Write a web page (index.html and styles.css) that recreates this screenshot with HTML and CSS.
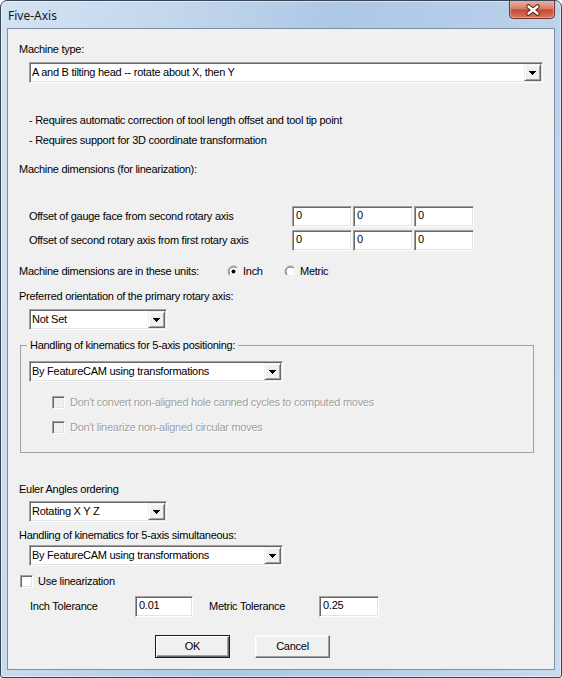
FILE: index.html
```html
<!DOCTYPE html>
<html>
<head>
<meta charset="utf-8">
<title>Five-Axis</title>
<link rel="stylesheet" href="styles.css">
</head>
<body>
<div class="window">
  <div class="titlebar">
    <span class="title">Five-Axis</span>
    <div class="close">
      <svg width="46" height="18" viewBox="0 0 46 18">
        <defs>
          <linearGradient id="cg" x1="0" y1="0" x2="0" y2="1">
            <stop offset="0" stop-color="#eab0a2"/>
            <stop offset="0.45" stop-color="#d67b66"/>
            <stop offset="0.5" stop-color="#c44a32"/>
            <stop offset="1" stop-color="#d9775e"/>
          </linearGradient>
        </defs>
        <path d="M0.5 0 V13.5 Q0.5 17.5 4.5 17.5 H41.5 Q45.5 17.5 45.5 13.5 V0" fill="url(#cg)" stroke="#6e2f24"/>
        <path d="M1.5 0 V13 Q1.5 16.5 5 16.5 H41 Q44.5 16.5 44.5 13 V0" fill="none" stroke="#f2c4b8" stroke-opacity="0.6"/>
        <path d="M19.5 5.5 L28.5 12.5 M28.5 5.5 L19.5 12.5" stroke="#5a2217" stroke-width="4.5" stroke-linecap="round"/>
        <path d="M19.5 5.5 L28.5 12.5 M28.5 5.5 L19.5 12.5" stroke="#ffffff" stroke-width="2.4" stroke-linecap="round"/>
      </svg>
    </div>
  </div>
  <div class="client">
    <div class="lbl r-machtype">Machine type:</div>
    <div class="combo c-main r-maincombo">
      <span class="val">A and B tilting head -- rotate about X, then Y</span>
      <span class="btn"><svg class="arrow" width="7" height="4" viewBox="0 0 7 4"><path d="M0 0h7v1h-1v1h-1v1h-1v1h-1v-1h-1v-1h-1v-1h-1z" fill="#000"/></svg></span>
    </div>
    <div class="note r-note1">- Requires automatic correction of tool length offset and tool tip point</div>
    <div class="note r-note2">- Requires support for 3D coordinate transformation</div>
    <div class="lbl r-machdim">Machine dimensions (for linearization):</div>

    <div class="offset-row r-off1">
      <span class="off-lbl">Offset of gauge face from second rotary axis</span>
      <div class="edits">
        <span class="edit e-off">0</span><span class="edit e-off">0</span><span class="edit e-off">0</span>
      </div>
    </div>
    <div class="offset-row r-off2">
      <span class="off-lbl">Offset of second rotary axis from first rotary axis</span>
      <div class="edits">
        <span class="edit e-off">0</span><span class="edit e-off">0</span><span class="edit e-off">0</span>
      </div>
    </div>

    <div class="units-row r-units">
      <span class="units-lbl">Machine dimensions are in these units:</span>
      <span class="radio-opt opt-inch">
        <svg class="radio" width="13" height="13" viewBox="0 0 13 13">
          <circle cx="6.5" cy="6.5" r="5" fill="#fff"/>
          <path d="M2.6 10.4 A5.5 5.5 0 0 1 10.4 2.6" fill="none" stroke="#a0a0a0"/>
          <path d="M10.4 2.6 A5.5 5.5 0 0 1 2.6 10.4" fill="none" stroke="#ffffff"/>
          <path d="M3.3 9.7 A4.5 4.5 0 0 1 9.7 3.3" fill="none" stroke="#696969"/>
          <path d="M9.7 3.3 A4.5 4.5 0 0 1 3.3 9.7" fill="none" stroke="#e3e3e3"/>
          <circle cx="6.5" cy="6.5" r="2" fill="#000"/>
        </svg>
        <span>Inch</span>
      </span>
      <span class="radio-opt">
        <svg class="radio" width="13" height="13" viewBox="0 0 13 13">
          <circle cx="6.5" cy="6.5" r="5" fill="#fff"/>
          <path d="M2.6 10.4 A5.5 5.5 0 0 1 10.4 2.6" fill="none" stroke="#a0a0a0"/>
          <path d="M10.4 2.6 A5.5 5.5 0 0 1 2.6 10.4" fill="none" stroke="#ffffff"/>
          <path d="M3.3 9.7 A4.5 4.5 0 0 1 9.7 3.3" fill="none" stroke="#696969"/>
          <path d="M9.7 3.3 A4.5 4.5 0 0 1 3.3 9.7" fill="none" stroke="#e3e3e3"/>
        </svg>
        <span>Metric</span>
      </span>
    </div>

    <div class="lbl r-pref">Preferred orientation of the primary rotary axis:</div>
    <div class="combo c-small r-notset">
      <span class="val">Not Set</span>
      <span class="btn"><svg class="arrow" width="7" height="4" viewBox="0 0 7 4"><path d="M0 0h7v1h-1v1h-1v1h-1v1h-1v-1h-1v-1h-1v-1h-1z" fill="#000"/></svg></span>
    </div>

    <fieldset class="group r-group">
      <legend>Handling of kinematics for 5-axis positioning:</legend>
      <div class="combo c-mid g-combo">
        <span class="val">By FeatureCAM using transformations</span>
        <span class="btn"><svg class="arrow" width="7" height="4" viewBox="0 0 7 4"><path d="M0 0h7v1h-1v1h-1v1h-1v1h-1v-1h-1v-1h-1v-1h-1z" fill="#000"/></svg></span>
      </div>
      <div class="check-row disabled g-check1">
        <span class="checkbox"></span>
        <span class="check-lbl">Don't convert non-aligned hole canned cycles to computed moves</span>
      </div>
      <div class="check-row disabled g-check2">
        <span class="checkbox"></span>
        <span class="check-lbl">Don't linearize non-aligned circular moves</span>
      </div>
    </fieldset>

    <div class="lbl r-euler">Euler Angles ordering</div>
    <div class="combo c-small r-rot">
      <span class="val">Rotating X Y Z</span>
      <span class="btn"><svg class="arrow" width="7" height="4" viewBox="0 0 7 4"><path d="M0 0h7v1h-1v1h-1v1h-1v1h-1v-1h-1v-1h-1v-1h-1z" fill="#000"/></svg></span>
    </div>
    <div class="lbl r-sim">Handling of kinematics for 5-axis simultaneous:</div>
    <div class="combo c-mid r-simcombo">
      <span class="val">By FeatureCAM using transformations</span>
      <span class="btn"><svg class="arrow" width="7" height="4" viewBox="0 0 7 4"><path d="M0 0h7v1h-1v1h-1v1h-1v1h-1v-1h-1v-1h-1v-1h-1z" fill="#000"/></svg></span>
    </div>
    <div class="check-row r-lin">
      <span class="checkbox"></span>
      <span class="check-lbl">Use linearization</span>
    </div>
    <div class="tol-row r-tol">
      <span class="tol-lbl t-inch">Inch Tolerance</span>
      <span class="edit e-tol1">0.01</span>
      <span class="tol-lbl t-metric">Metric Tolerance</span>
      <span class="edit e-tol2">0.25</span>
    </div>
    <div class="btn-row r-buttons">
      <span class="push default">OK</span>
      <span class="push">Cancel</span>
    </div>
  </div>
</div>
</body>
</html>
```

FILE: styles.css
```css
html, body {
  margin: 0;
  padding: 0;
  background: #ffffff;
}

.window {
  box-sizing: border-box;
  width: 562px;
  height: 678px;
  border: 1px solid #3a4656;
  border-radius: 7px 7px 3px 3px;
  padding: 0 6px 7px 6px;
  display: flex;
  flex-direction: column;
  background: linear-gradient(100deg, #d4e3f3 0%, #c3d7ed 25%, #adc8e5 50%, #b6cee9 72%, #c8dbef 100%);
  box-shadow: inset 0 0 0 1px rgba(255, 255, 255, 0.45);
}

.titlebar {
  height: 27px;
  display: flex;
  align-items: flex-start;
  flex: none;
}

.title {
  font-family: "Noto Sans", "Open Sans", sans-serif;
  font-size: 12px;
  line-height: 16px;
  color: #101820;
  padding: 7px 0 0 1px;
}

.close {
  margin-left: auto;
  width: 46px;
  height: 18px;
  line-height: 0;
}

.client {
  flex: 1;
  border: 1px solid #7c8fa5;
  background: #f0f0f0;
  padding: 0 0 0 11px;
  font-family: "Liberation Sans", Arial, sans-serif;
  font-size: 11px;
  line-height: 13px;
  letter-spacing: -0.27px;
  color: #000;
  display: flex;
  flex-direction: column;
  align-items: flex-start;
  overflow: hidden;
}

.lbl, .note {
  white-space: nowrap;
  height: 13px;
}

.note {
  margin-left: 10px;
}

/* sunken field */
.combo, .edit {
  box-sizing: border-box;
  height: 21px;
  border: 1px solid;
  border-color: #a0a0a0 #ffffff #ffffff #a0a0a0;
  box-shadow: inset 1px 1px 0 #696969, inset -1px -1px 0 #e3e3e3;
  background: #ffffff;
}

.combo {
  display: flex;
  padding: 1px;
  margin-left: 10px;
}

.combo .val {
  flex: 1;
  padding-left: 1px;
  line-height: 17px;
  white-space: nowrap;
  overflow: hidden;
}

.combo .btn {
  box-sizing: border-box;
  width: 17px;
  height: 17px;
  border: 1px solid;
  border-color: #f0f0f0 #696969 #696969 #f0f0f0;
  box-shadow: inset 1px 1px 0 #ffffff, inset -1px -1px 0 #a0a0a0;
  background: #f0f0f0;
  display: flex;
  align-items: center;
  justify-content: center;
}

.arrow {
  display: block;
  shape-rendering: crispEdges;
  margin-top: 1px;
}

.c-main { width: 514px; }
.c-small { width: 138px; }
.c-mid { width: 254px; }

.edit {
  display: inline-block;
  padding-left: 3px;
  line-height: 17px;
}

.offset-row {
  display: flex;
  align-items: center;
  height: 21px;
  margin-left: 10px;
}

.off-lbl {
  width: 263px;
  white-space: nowrap;
}

.edits {
  display: flex;
  gap: 1px;
}

.e-off { width: 60px; }

.units-row {
  display: flex;
  align-items: center;
  height: 13px;
}

.units-lbl {
  width: 208px;
  white-space: nowrap;
}

.radio-opt {
  display: flex;
  align-items: center;
  gap: 3px;
}

.opt-inch { width: 57px; }

.radio { display: block; }

.group {
  box-sizing: border-box;
  width: 514px;
  margin-left: 1px;
  margin-right: 0;
  margin-bottom: 0;
  padding: 0 0 18px 0;
  border: 1px solid #a0a0a0;
  min-width: 0;
  display: flex;
  flex-direction: column;
  align-items: flex-start;
}

.group legend {
  margin-left: 6px;
  padding: 0 3px;
  line-height: 13px;
  white-space: nowrap;
}

.g-combo { margin-top: 9px; margin-left: 8px; }

.check-row {
  display: flex;
  align-items: center;
  height: 13px;
  gap: 5px;
}

.checkbox {
  box-sizing: border-box;
  width: 13px;
  height: 13px;
  border: 1px solid;
  border-color: #a0a0a0 #ffffff #ffffff #a0a0a0;
  box-shadow: inset 1px 1px 0 #696969, inset -1px -1px 0 #e3e3e3;
  background: #ffffff;
}

.check-lbl { white-space: nowrap; }

.disabled .checkbox { background: #f0f0f0; }
.disabled .check-lbl {
  color: #a0a0a0;
  text-shadow: 1px 1px 0 #ffffff;
}

.g-check1 { margin-top: 14px; margin-left: 31px; }
.g-check2 { margin-top: 12px; margin-left: 31px; }

.tol-row {
  display: flex;
  align-items: center;
  height: 21px;
  margin-left: 11px;
}

.tol-lbl { white-space: nowrap; }
.t-inch { width: 105px; }
.t-metric { width: 110px; margin-left: 16px; }
.e-tol1 { width: 58px; }
.e-tol2 { width: 60px; }

.btn-row {
  display: flex;
  gap: 25px;
  margin-left: 136px;
}

.push {
  box-sizing: border-box;
  width: 75px;
  height: 23px;
  line-height: 21px;
  text-align: center;
  background: #f0f0f0;
  border: 1px solid;
  border-color: #ffffff #696969 #696969 #ffffff;
  box-shadow: inset -1px -1px 0 #a0a0a0, inset 1px 1px 0 #f8f8f8;
}

.push.default {
  border-color: #1a1a1a;
  box-shadow: inset 1px 1px 0 #ffffff, inset -1px -1px 0 #696969, inset -2px -2px 0 #a0a0a0;
}

/* vertical rhythm (kept last so it wins over component margins) */
.r-machtype { margin-top: 14px; }
.r-maincombo { margin-top: 6px; }
.r-note1 { margin-top: 31px; }
.r-note2 { margin-top: 7px; }
.r-machdim { margin-top: 16px; }
.r-off1 { margin-top: 30px; }
.r-off2 { margin-top: 3px; }
.r-units { margin-top: 14px; }
.r-pref { margin-top: 12px; }
.r-notset { margin-top: 6px; }
.r-group { margin-top: 9px; }
.r-euler { margin-top: 30px; }
.r-rot { margin-top: 5px; }
.r-sim { margin-top: 7px; }
.r-simcombo { margin-top: 3px; }
.r-lin { margin-top: 9px; margin-left: 1px; }
.r-tol { margin-top: 8px; }
.r-buttons { margin-top: 18px; }
```
